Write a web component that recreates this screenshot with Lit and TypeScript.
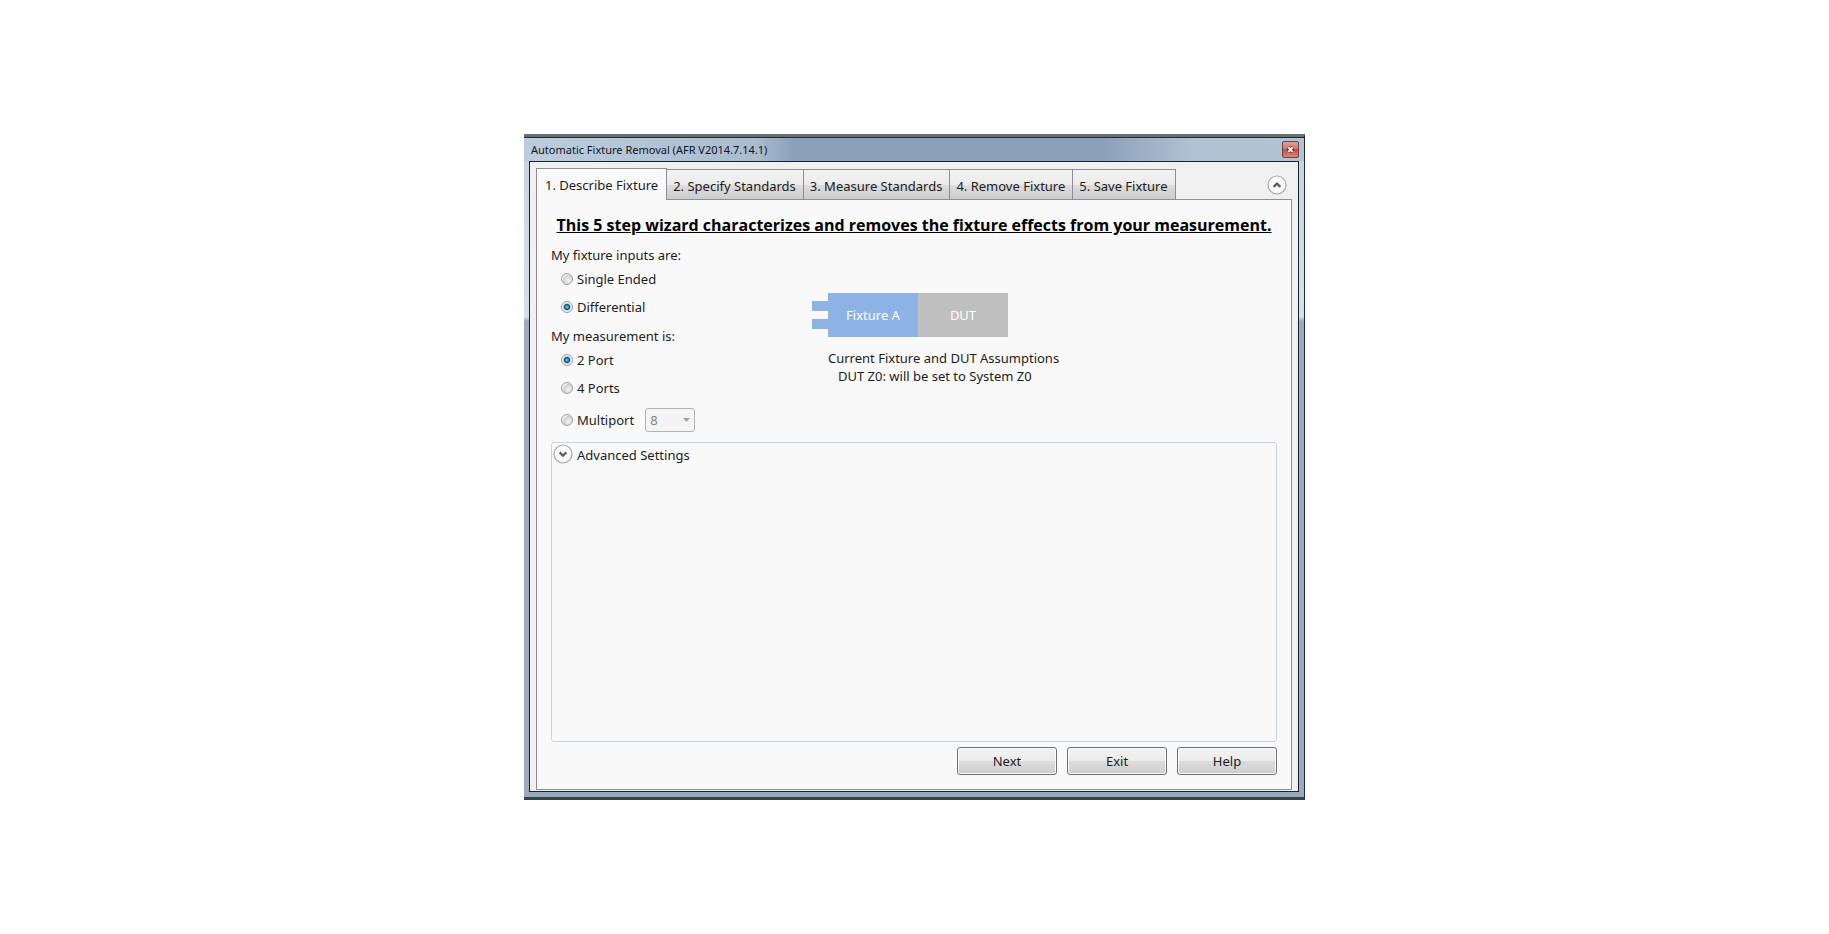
import { LitElement, html, css, svg } from "lit";
import { customElement, state } from "lit/decorators.js";
import { classMap } from "lit/directives/class-map.js";

const TABS = [
  "1. Describe Fixture",
  "2. Specify Standards",
  "3. Measure Standards",
  "4. Remove Fixture",
  "5. Save Fixture",
];

const INPUTS = ["Single Ended", "Differential"];
const ACTIONS = ["Next", "Exit", "Help"];

const chevron = (down: boolean) => html`
  <svg width="20" height="20" viewBox="0 0 20 20" aria-hidden="true">
    <circle cx="10" cy="10" r="9" fill="#fafafa" stroke="#a9a9a9" stroke-width="1.2" />
    ${down
      ? svg`<path d="M6.6 8.4 L10 11.6 L13.4 8.4" fill="none" stroke="#606060" stroke-width="2.4" />`
      : svg`<path d="M6.6 11.8 L10 8.6 L13.4 11.8" fill="none" stroke="#606060" stroke-width="2.4" />`}
  </svg>
`;

@customElement("app-root")
export class AppRoot extends LitElement {
  @state() private tab = 0;
  @state() private input = "Differential";
  @state() private ports = "2";

  static styles = css`
    :host {
      display: flex;
      align-items: center;
      justify-content: center;
      min-height: 100vh;
      background: #fff;
      color: #1c1c1c;
      font: 13px/18px "Noto Sans", "Open Sans", sans-serif;
    }
    * {
      box-sizing: border-box;
    }
    button,
    select {
      font: inherit;
      color: inherit;
      margin: 0;
    }
    .window {
      display: flex;
      flex-direction: column;
      width: 100%;
      max-width: 781px;
      border: solid #1d2a36;
      border-width: 1px 1px 3px 0;
      border-bottom-color: #37444f;
      border-top: 3px solid #6a6f6f;
      background: linear-gradient(#c3d3e0 0, #d5e0e8 180px, #9babbd 184px, #9babbd 100%);
      padding: 0 5px 5px;
    }
    .titlebar {
      display: flex;
      align-items: center;
      justify-content: space-between;
      height: 24px;
      margin: 0 -5px;
      padding: 0 5px 0 7px;
      border-top: 1px solid #1d2a36;
      background: linear-gradient(
        90deg,
        #bccddd 0,
        #aabdd0 230px,
        #8ba0b9 270px,
        #8ba0b9 74%,
        #b0c2d4 86%,
        #b3c3d3 100%
      );
    }
    .title {
      margin: 0;
      font-size: 11px;
      font-weight: 400;
      color: #10151c;
    }
    .close {
      display: flex;
      padding: 0;
      border: 0;
      background: none;
    }
    .client {
      display: flex;
      flex-direction: column;
      padding: 6px 6px 1px;
      border: 1px solid #18222d;
      background: #f0f0f0;
    }
    .strip {
      display: flex;
      align-items: flex-end;
      justify-content: space-between;
      padding-right: 5px;
    }
    .tabs {
      display: flex;
      align-items: flex-end;
    }
    .tab {
      height: 30px;
      padding: 2px 7px 0 6px;
      border: 1px solid #8c8e94;
      border-right-width: 0;
      border-bottom: 0;
      background: linear-gradient(#f3f3f3, #ebebeb 50%, #dddddd 50%, #cdcdcd);
      white-space: nowrap;
    }
    .tab:last-child {
      border-right-width: 1px;
    }
    .tab.active {
      position: relative;
      height: 32px;
      margin-bottom: -1px;
      padding: 0 8px;
      border-right-width: 1px;
      background: #f9f9f9;
    }
    .tab.active + .tab {
      border-left-width: 0;
    }
    .round {
      display: flex;
      padding: 0;
      border: 0;
      background: none;
    }
    .strip .round {
      margin-bottom: 4px;
    }
    .panel {
      display: flex;
      flex-direction: column;
      padding: 13px 14px 14px;
      border: 1px solid #8c8e94;
      background: #f9f9f9;
    }
    .heading {
      margin: 0 0 9px;
      font: 700 16px/24px "Open Sans", "Noto Sans", sans-serif;
      text-align: center;
      text-decoration: underline;
      color: #000;
    }
    .setup {
      display: grid;
      grid-template-columns: 261px 1fr;
      margin-bottom: 4px;
    }
    .group {
      margin: 0;
      padding: 0;
      border: 0;
    }
    .group legend {
      padding: 0;
      height: 19px;
    }
    .group + .group {
      margin-top: 6px;
    }
    .choices {
      display: flex;
      flex-direction: column;
      padding-left: 10px;
    }
    .row {
      display: flex;
      align-items: center;
      height: 28px;
    }
    .row.tall {
      height: 36px;
    }
    .row label {
      display: flex;
      align-items: center;
      gap: 4px;
    }
    .radio {
      appearance: none;
      width: 12px;
      height: 12px;
      margin: 0;
      border: 1px solid #9c9d9d;
      border-radius: 50%;
      background: radial-gradient(circle at 65% 65%, #f2f2f2 0, #dcdcdc 40%, #cccccc 55%, #f4f4f4 62%);
    }
    .radio:checked {
      background: radial-gradient(circle at 50% 50%, #7fd4ee 0, #2c8db4 22%, #174a68 38%, #b5d3e2 50%, #f0f4f6 62%);
    }
    .combo {
      display: grid;
      align-items: center;
      width: 50px;
      margin-left: 11px;
    }
    .combo select,
    .combo svg {
      grid-area: 1 / 1;
    }
    .combo select {
      appearance: none;
      width: 100%;
      height: 24px;
      padding: 0 4px;
      border: 1px solid #adb2b5;
      border-radius: 3px;
      background: #f4f4f4;
      color: #838383;
      opacity: 1;
    }
    .combo svg {
      justify-self: end;
      margin-right: 5px;
      pointer-events: none;
    }
    .diagram {
      display: flex;
      flex-direction: column;
      padding-top: 47px;
    }
    .blocks {
      display: flex;
      height: 44px;
      color: #fff;
    }
    .leads {
      display: flex;
      flex-direction: column;
      justify-content: space-between;
      width: 16px;
      padding: 8px 0;
    }
    .lead {
      height: 10px;
      background: #8db2e3;
    }
    .block {
      display: flex;
      align-items: center;
      justify-content: center;
      width: 90px;
      background: #8db2e3;
    }
    .block.dut {
      background: #bfbfbf;
    }
    .notes {
      padding: 12px 0 0 16px;
    }
    .notes p {
      margin: 0;
    }
    .notes p + p {
      padding-left: 10px;
    }
    .advanced {
      display: flex;
      align-items: flex-start;
      gap: 4px;
      min-height: 300px;
      padding: 1px;
      border: 1px solid #c9d3e2;
      border-radius: 3px;
    }
    .advanced .label {
      line-height: 22px;
    }
    .actions {
      display: flex;
      justify-content: flex-end;
      gap: 10px;
      padding-top: 5px;
    }
    .action {
      width: 100px;
      height: 28px;
      padding: 0;
      border: 1px solid #707070;
      border-radius: 3px;
      background: linear-gradient(#f3f3f3, #ebebeb 50%, #dddddd 50%, #cdcdcd);
      box-shadow: inset 0 0 0 1px #fafafa;
    }
  `;

  private radio(group: string, id: string, label: string, checked: boolean, pick: () => void) {
    return html`<label for=${id}>
      <input class="radio" type="radio" id=${id} name=${group} .checked=${checked} @change=${pick} />
      ${label}
    </label>`;
  }

  render() {
    return html`
      <main class="window">
        <header class="titlebar">
          <h1 class="title">Automatic Fixture Removal (AFR V2014.7.14.1)</h1>
          <button class="close" aria-label="Close">
            <svg width="17" height="17" viewBox="0 0 17 17" aria-hidden="true">
              <defs>
                <linearGradient id="red" x1="0" y1="0" x2="0" y2="1">
                  <stop offset="0" stop-color="#e3a298" />
                  <stop offset=".45" stop-color="#d07a6d" />
                  <stop offset=".5" stop-color="#bf5042" />
                  <stop offset="1" stop-color="#dc8a7e" />
                </linearGradient>
              </defs>
              <rect x=".5" y=".5" width="16" height="16" rx="1.5" fill="url(#red)" stroke="#6e3f45" />
              <path d="M6 6.4 L11 10.8 M11 6.4 L6 10.8" stroke="#5c3a40" stroke-width="4" />
              <path d="M6.4 6.4 L10.6 10.8 M10.6 6.4 L6.4 10.8" stroke="#fff" stroke-width="1.9" />
            </svg>
          </button>
        </header>
        <section class="client">
          <div class="strip">
            <div class="tabs" role="tablist">
              ${TABS.map(
                (name, i) => html`<button
                  role="tab"
                  aria-selected=${i === this.tab}
                  class=${classMap({ tab: true, active: i === this.tab })}
                  @click=${() => (this.tab = i)}
                >${name}</button>`
              )}
            </div>
            <button class="round" aria-label="Collapse">${chevron(false)}</button>
          </div>
          <div class="panel" role="tabpanel">
            <h2 class="heading">
              This 5 step wizard characterizes and removes the fixture effects from your measurement.
            </h2>
            <div class="setup">
              <div>
                <fieldset class="group">
                  <legend>My fixture inputs are:</legend>
                  <div class="choices">
                    ${INPUTS.map(
                      (name, i) => html`<div class="row">
                        ${this.radio("inputs", `input-${i}`, name, this.input === name, () => (this.input = name))}
                      </div>`
                    )}
                  </div>
                </fieldset>
                <fieldset class="group">
                  <legend>My measurement is:</legend>
                  <div class="choices">
                    <div class="row">
                      ${this.radio("ports", "ports-2", "2 Port", this.ports === "2", () => (this.ports = "2"))}
                    </div>
                    <div class="row">
                      ${this.radio("ports", "ports-4", "4 Ports", this.ports === "4", () => (this.ports = "4"))}
                    </div>
                    <div class="row tall">
                      ${this.radio("ports", "ports-n", "Multiport", this.ports === "n", () => (this.ports = "n"))}
                      <div class="combo">
                        <select aria-label="Number of ports" ?disabled=${this.ports !== "n"}>
                          <option>8</option>
                        </select>
                        <svg width="7" height="4" viewBox="0 0 7 4" aria-hidden="true">
                          <path d="M0 0 H7 L3.5 4 Z" fill="#a0a0a0" />
                        </svg>
                      </div>
                    </div>
                  </div>
                </fieldset>
              </div>
              <div class="diagram">
                <div class="blocks">
                  <div class="leads">
                    <div class="lead"></div>
                    <div class="lead"></div>
                  </div>
                  <div class="block">Fixture A</div>
                  <div class="block dut">DUT</div>
                </div>
                <div class="notes">
                  <p>Current Fixture and DUT Assumptions</p>
                  <p>DUT Z0: will be set to System Z0</p>
                </div>
              </div>
            </div>
            <section class="advanced">
              <button class="round" id="expander" aria-label="Expand advanced settings">${chevron(true)}</button>
              <label class="label" for="expander">Advanced Settings</label>
            </section>
            <div class="actions">
              ${ACTIONS.map((name) => html`<button class="action">${name}</button>`)}
            </div>
          </div>
        </section>
      </main>
    `;
  }
}
